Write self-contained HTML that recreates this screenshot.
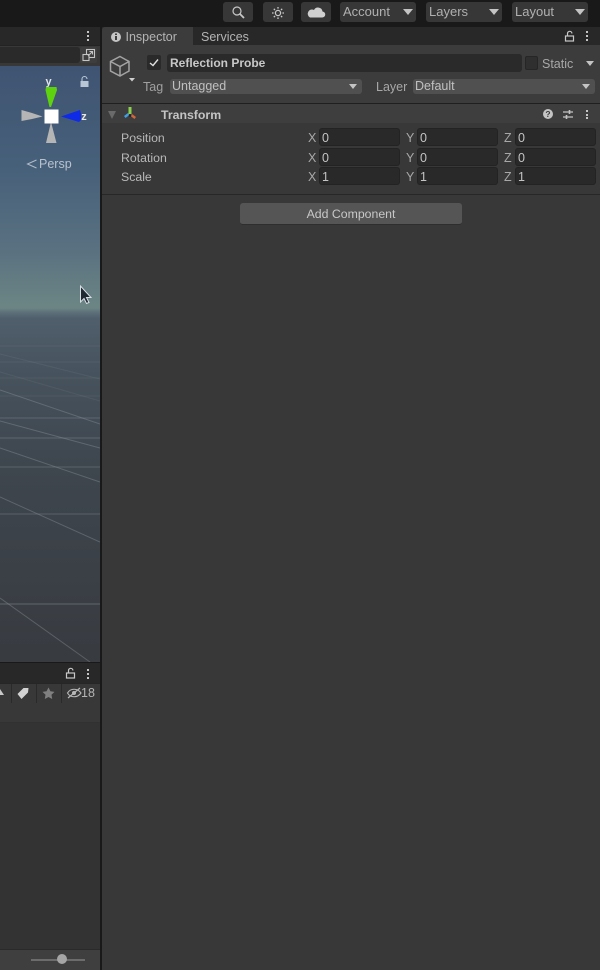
<!DOCTYPE html>
<html><head><meta charset="utf-8">
<style>
*{box-sizing:border-box}
html,body{margin:0;padding:0;background:#191919}
body{width:600px;height:970px;overflow:hidden;position:relative;font-family:"Liberation Sans",sans-serif;font-size:12.5px;color:#c4c4c4}
.a{position:absolute}
.t{position:absolute;white-space:nowrap;line-height:14px}
.dd{position:absolute;background:#373737;border-radius:3px;height:20px;top:2px}
.dd .t{top:3px;left:3px;color:#b0b0b0;font-size:13px}
.tri{position:absolute;width:0;height:0;border-left:5px solid transparent;border-right:5px solid transparent;border-top:6px solid #c4c4c4}
.btn{position:absolute;top:2px;height:20px;width:30px;background:#373737;border-radius:3px}
.f{position:absolute;width:81px;height:18px;background:#292929;border:1px solid #232323;border-radius:3px;color:#c4c4c4}
.f span{position:absolute;left:2px;top:2px;line-height:14px;font-size:12.5px}
.axis{position:absolute;color:#a8a8a8;font-size:12.5px;line-height:14px}
.lab{position:absolute;left:121px;color:#b8b8b8;line-height:14px;font-size:12.3px}
.sm{position:absolute;background:#c4c4c4;width:2px;height:2px}
</style></head>
<body>
<!-- top bar -->
<div class="a" style="left:0;top:0;width:600px;height:27px;background:#191919"></div>
<div class="btn" style="left:223px"></div>
<div class="btn" style="left:263px"></div>
<div class="btn" style="left:301px"></div>
<svg class="a" style="left:223px;top:2px" width="110" height="20" fill="none" stroke="#c8c8c8">
 <circle cx="14" cy="9" r="4" stroke-width="1.2"/><path d="M17 12l4 4" stroke-width="1.8"/>
 <circle cx="55" cy="11" r="2.6" stroke-width="1.3"/><path d="M55 5v1.6M55 15.4V17M49 11h1.6M59.4 11H61M50.8 6.8l1.2 1.2M58 14l1.2 1.2M59.2 6.8L58 8M52 14l-1.2 1.2" stroke-width="1.3"/>
 <path d="M87 15.5h12a3 3 0 0 0 .5-6 4.5 4.5 0 0 0-8.5-1.5 3.8 3.8 0 0 0-4 7.5z" fill="#d0d0d0" stroke="none"/>
</svg>
<div class="dd" style="left:340px;width:76px"><span class="t">Account</span><div class="tri" style="left:63px;top:7px"></div></div>
<div class="dd" style="left:426px;width:76px"><span class="t">Layers</span><div class="tri" style="left:63px;top:7px"></div></div>
<div class="dd" style="left:512px;width:76px"><span class="t">Layout</span><div class="tri" style="left:63px;top:7px"></div></div>

<!-- left top tabs + toolbar -->
<div class="a" style="left:0;top:27px;width:100px;height:18px;background:#282828"></div>
<div class="sm" style="left:87px;top:31px"></div><div class="sm" style="left:87px;top:35px"></div><div class="sm" style="left:87px;top:39px"></div>
<div class="a" style="left:0;top:45px;width:100px;height:21px;background:#383838;border-top:1px solid #232323"></div>
<div class="a" style="left:0;top:47px;width:80px;height:16px;background:#2a2a2a;border-radius:0 3px 3px 0"></div>
<div class="a" style="left:80px;top:47px;width:17px;height:16px;background:#3e3e3e;border-radius:2px"></div>
<svg class="a" style="left:80px;top:47px" width="17" height="16" fill="none" stroke="#c4c4c4" stroke-width="1.1">
 <rect x="6.5" y="2.5" width="8" height="8"/><rect x="3" y="7.5" width="6" height="6" fill="#3e3e3e"/><path d="M8 9l4-4M9.5 4.5h3v3"/>
</svg>

<!-- scene -->
<div class="a" style="left:0;top:66px;width:100px;height:596px;background:linear-gradient(180deg,#3f5472 0px,#47607a 100px,#587080 180px,#6c8584 242px,#5e727b 246px,#505f6c 252px,#46525d 310px,#3e464e 400px,#383b40 596px);overflow:hidden">
 <svg width="100" height="596" style="position:absolute;left:0;top:0" fill="none" stroke="#8f979d" stroke-width="1">
  <g stroke-opacity=".14">
   <path d="M0 280H100M0 296H100M0 312H100M0 330H100"/>
   <path d="M0 288L100 313M0 306L100 335"/>
  </g>
  <g stroke-opacity=".36">
   <path d="M0 352H100M0 372H100M0 401H100M0 448H100"/>
  </g>
  <path d="M0 538H100" stroke-opacity=".45"/>
  <g stroke-opacity=".4">
   <path d="M0 324L100 358M0 355L100 382M0 382L100 416M0 431L100 476M0 532L90 596"/>
  </g>
 </svg>
</div>
<!-- gizmo -->
<svg class="a" style="left:0;top:66px" width="100" height="100">
 <text x="48.5" y="19" font-family="Liberation Sans" font-weight="700" font-size="11" fill="#dfe4ea" text-anchor="middle">y</text>
 <path d="M46 21L56.5 21 57 24 51 41 49.5 41 45.5 24z" fill="#5fd20f"/>
 <path d="M21.5 44L32 47 42.5 50.5 32 53 21.5 55z" fill="#b5b5b5"/>
 <path d="M61 50.5L80 44 81 48 81 54 79 56z" fill="#0f2be8"/>
 <text x="84" y="54" font-family="Liberation Sans" font-weight="700" font-size="11" fill="#e6e6e6" text-anchor="middle">z</text>
 <path d="M51 56L56.5 77 46 77z" fill="#b5b5b5"/>
 <rect x="44.5" y="43.5" width="14" height="14" fill="#fff"/>
 <rect x="80.5" y="15" width="8" height="6" fill="#b9c6d6"/>
 <path d="M82 15v-2a2.5 2.5 0 0 1 5 0" fill="none" stroke="#b9c6d6" stroke-width="1.1"/>
</svg>
<svg class="a" style="left:26px;top:158px" width="12" height="12" fill="none" stroke="#b2bdc9"><path d="M10.5 2L1.5 6l9 4"/></svg>
<span class="t" style="left:39px;top:157px;color:#b9c2cc;font-size:12.5px">Persp</span>
<!-- cursor -->
<svg class="a" style="left:78px;top:284px" width="16" height="22"><path d="M2.5 2v16l3.5-3.500 2.500 5 2.500-1-2.500-5h4.500z" fill="#1f2933" stroke="#d7dee4" stroke-width="1"/></svg>

<!-- bottom-left panel -->
<div class="a" style="left:0;top:662px;width:100px;height:21px;background:#282828;border-top:1px solid #191919"></div>
<svg class="a" style="left:65px;top:667px" width="12" height="12" fill="none" stroke="#c8c8c8" stroke-width="1.2"><rect x="1.5" y="6" width="8" height="5"/><path d="M3.5 6V3.5a2.2 2.2 0 0 1 4.4 0"/></svg>
<div class="sm" style="left:87px;top:669px"></div><div class="sm" style="left:87px;top:673px"></div><div class="sm" style="left:87px;top:677px"></div>
<div class="a" style="left:0;top:683px;width:100px;height:20px;background:#383838;border-top:1px solid #262626"></div>
<div class="a" style="left:11px;top:684px;width:1px;height:19px;background:#2a2a2a"></div>
<div class="a" style="left:36px;top:684px;width:1px;height:19px;background:#2a2a2a"></div>
<div class="a" style="left:61px;top:684px;width:1px;height:19px;background:#2a2a2a"></div>
<svg class="a" style="left:0;top:684px" width="100" height="19">
 <path d="M-3 11L0 5 4 11z" fill="#c8c8c8"/>
 <path d="M17.5 10L23.5 4h5l-.5 4.5-6.500 6.500z" fill="#d2d2d2"/>
 <path d="M48.5 3.5l1.900 3.800 4.100.6-3 2.900.7 4.200-3.700-2-3.700 2 .7-4.200-3-2.900 4.100-.6z" fill="#808080"/>
 <path d="M67.5 9c3-5 10-5 13.500 0-3.500 5-10.500 5-13.500 0z" fill="none" stroke="#b8b8b8" stroke-width="1.1"/><circle cx="74" cy="9" r="2" fill="#b8b8b8"/><path d="M68 14L80 4" stroke="#b8b8b8" stroke-width="1.2"/>
</svg>
<span class="t" style="left:81px;top:686px;color:#b4b4b4;font-size:12.5px">18</span>
<div class="a" style="left:0;top:703px;width:100px;height:20px;background:#383838;border-bottom:1px solid #313131"></div>
<div class="a" style="left:0;top:723px;width:100px;height:227px;background:#333333"></div>
<div class="a" style="left:0;top:949px;width:100px;height:21px;background:#3f3f3f;border-top:1px solid #2a2a2a"></div>
<div class="a" style="left:31px;top:959px;width:54px;height:2px;background:#6c6c6c"></div>
<div class="a" style="left:57px;top:954px;width:10px;height:10px;border-radius:50%;background:#a5a5a5"></div>

<!-- inspector -->
<div class="a" style="left:102px;top:27px;width:498px;height:18px;background:#282828"></div>
<div class="a" style="left:102px;top:45px;width:498px;height:925px;background:#383838"></div>
<div class="a" style="left:102px;top:45px;width:498px;height:58px;background:#3c3c3c"></div>
<div class="a" style="left:102px;top:27px;width:91px;height:19px;background:#3c3c3c;border-radius:3px 0 0 0"></div>
<svg class="a" style="left:110px;top:31px" width="12" height="12"><circle cx="6" cy="6" r="5" fill="#c4c4c4"/><rect x="5" y="5" width="2" height="4" fill="#3c3c3c"/><rect x="5" y="2.5" width="2" height="1.5" fill="#3c3c3c"/></svg>
<span class="t" style="left:125.5px;top:30px;color:#b4b4b4;font-size:12.5px">Inspector</span>
<span class="t" style="left:201px;top:30px;color:#b4b4b4;font-size:12.5px">Services</span>
<svg class="a" style="left:564px;top:30px" width="12" height="12" fill="none" stroke="#c8c8c8" stroke-width="1.2"><rect x="1.5" y="6" width="8" height="5"/><path d="M3.5 6V3.5a2.2 2.2 0 0 1 4.4 0"/></svg>
<div class="sm" style="left:586px;top:31px"></div><div class="sm" style="left:586px;top:35px"></div><div class="sm" style="left:586px;top:39px"></div>

<!-- object header -->
<svg class="a" style="left:108px;top:54px" width="30" height="30" fill="none" stroke="#a3a3a3" stroke-width="1.5">
 <path d="M12 2.5L21 7.5V17L12 22 2.5 17V7.5zM2.5 7.5L12 12.5 21 7.5M12 12.5V22"/>
 <path d="M21 24l6 0-3 3.5z" fill="#d0d0d0" stroke="none"/>
</svg>
<div class="a" style="left:147px;top:55px;width:14px;height:15px;background:#2a2a2a;border-radius:2px"></div>
<svg class="a" style="left:147px;top:55px" width="14" height="15" fill="none" stroke="#e0e0e0" stroke-width="1.4"><path d="M3 8l3 2.5 5-6"/></svg>
<div class="a" style="left:167px;top:54px;width:355px;height:18px;background:#2a2a2a;border-radius:3px"></div>
<span class="t" style="left:170px;top:56px;color:#c8c8c8;font-size:12px;font-weight:700">Reflection Probe</span>
<div class="a" style="left:525px;top:56px;width:13px;height:14px;background:#2f2f2f;border:1px solid #262626;border-radius:2px"></div>
<span class="t" style="left:542px;top:57px;color:#a8a8a8;font-size:12.5px">Static</span>
<div class="tri" style="left:586px;top:61px;border-left-width:4px;border-right-width:4px;border-top-width:5px"></div>
<span class="t" style="left:143px;top:80px;color:#a0a0a0;font-size:12.5px">Tag</span>
<div class="a" style="left:170px;top:79px;width:192px;height:15px;background:#505050;border-radius:3px"></div>
<span class="t" style="left:172px;top:79px;color:#c0c0c0;font-size:12.5px">Untagged</span>
<div class="tri" style="left:349px;top:84px;border-left-width:4px;border-right-width:4px;border-top-width:5px"></div>
<span class="t" style="left:376px;top:80px;color:#a8a8a8;font-size:12.5px">Layer</span>
<div class="a" style="left:413px;top:79px;width:182px;height:15px;background:#505050;border-radius:3px"></div>
<span class="t" style="left:415px;top:79px;color:#c0c0c0;font-size:12.5px">Default</span>
<div class="tri" style="left:582px;top:84px;border-left-width:4px;border-right-width:4px;border-top-width:5px"></div>

<!-- transform header -->
<div class="a" style="left:102px;top:103px;width:498px;height:1px;background:#1f1f1f"></div>
<div class="a" style="left:102px;top:104px;width:498px;height:19px;background:#3e3e3e"></div>
<div class="tri" style="left:108px;top:111px;border-left-width:4.5px;border-right-width:4.5px;border-top-width:8px;border-top-color:#6a6a6a"></div>
<svg class="a" style="left:122px;top:106px" width="16" height="16">
 <rect x="6.5" y="1" width="3" height="7" fill="#8cd150"/>
 <path d="M2 10l4-3 1.5 2-4 3z" fill="#3f9fe0"/>
 <path d="M10 8l4 3-1.5 2-4-3z" fill="#d0663c"/>
 <circle cx="8" cy="9.5" r="1.3" fill="#222"/>
</svg>
<span class="t" style="left:161px;top:107.5px;color:#c4c4c4;font-size:12.3px;font-weight:700">Transform</span>
<svg class="a" style="left:542px;top:108px" width="14" height="14"><circle cx="6" cy="6" r="5" fill="#c4c4c4"/><text x="6" y="9" font-family="Liberation Sans" font-weight="700" font-size="8.5" text-anchor="middle" fill="#3e3e3e">?</text></svg>
<svg class="a" style="left:562px;top:107px" width="12" height="14" stroke="#c4c4c4" stroke-width="1.2"><path d="M1 5h10M1 10h10"/><path d="M7.5 3v4M4.5 8v4" stroke-width="1.6"/></svg>
<div class="sm" style="left:586px;top:110px"></div><div class="sm" style="left:586px;top:113.5px"></div><div class="sm" style="left:586px;top:117px"></div>

<!-- rows -->
<span class="lab" style="top:131px">Position</span>
<span class="lab" style="top:150.5px">Rotation</span>
<span class="lab" style="top:170px">Scale</span>

<span class="axis" style="left:308px;top:131px">X</span><div class="f" style="left:319px;top:128px"><span>0</span></div>
<span class="axis" style="left:406px;top:131px">Y</span><div class="f" style="left:417px;top:128px"><span>0</span></div>
<span class="axis" style="left:504px;top:131px">Z</span><div class="f" style="left:515px;top:128px"><span>0</span></div>

<span class="axis" style="left:308px;top:150.5px">X</span><div class="f" style="left:319px;top:148px"><span>0</span></div>
<span class="axis" style="left:406px;top:150.5px">Y</span><div class="f" style="left:417px;top:148px"><span>0</span></div>
<span class="axis" style="left:504px;top:150.5px">Z</span><div class="f" style="left:515px;top:148px"><span>0</span></div>

<span class="axis" style="left:308px;top:170px">X</span><div class="f" style="left:319px;top:167px"><span>1</span></div>
<span class="axis" style="left:406px;top:170px">Y</span><div class="f" style="left:417px;top:167px"><span>1</span></div>
<span class="axis" style="left:504px;top:170px">Z</span><div class="f" style="left:515px;top:167px"><span>1</span></div>

<div class="a" style="left:102px;top:194px;width:498px;height:1px;background:#272727"></div>
<div class="a" style="left:240px;top:203px;width:222px;height:22px;background:#555555;border-radius:3px;border-bottom:1px solid #2e2e2e"></div>
<span class="t" style="left:240px;width:222px;text-align:center;top:207px;color:#c8c8c8;font-size:12.3px">Add Component</span>
<div class="a" style="left:100px;top:27px;width:2px;height:943px;background:#191919"></div>
</body></html>
